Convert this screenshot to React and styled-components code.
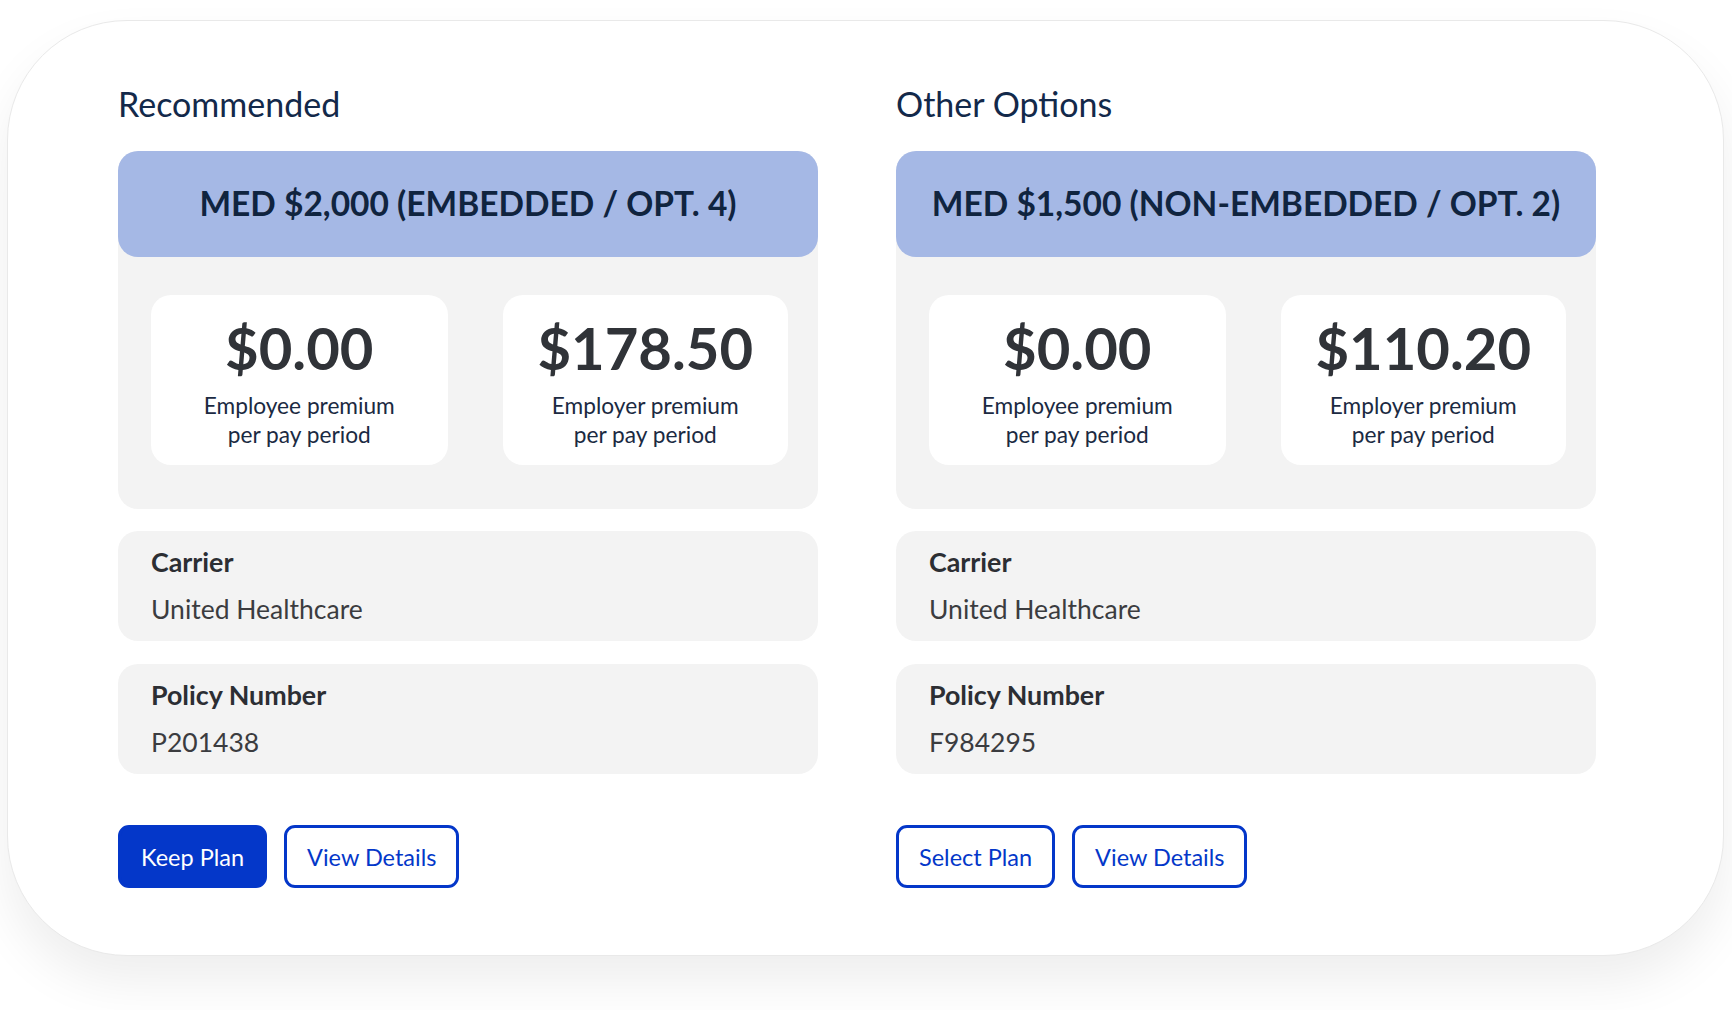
import React from 'react';
import styled, { createGlobalStyle } from 'styled-components';

const GlobalStyle = createGlobalStyle`
  html, body {
    margin: 0;
    padding: 0;
    background: #ffffff;
  }
  body {
    font-family: Lato, "Open Sans", sans-serif;
    -webkit-font-smoothing: antialiased;
  }
`;

const Page = styled.div`
  width: 1732px;
  height: 1010px;
  box-sizing: border-box;
  padding: 20px 8px 0 7px;
`;

const Card = styled.div`
  width: 1717px;
  height: 936px;
  box-sizing: border-box;
  background: #fff;
  border: 1px solid #e9e9e9;
  border-radius: 120px;
  box-shadow: 0 26px 50px rgba(0, 0, 0, 0.07);
  padding: 62px 126px 0 110px;
  display: grid;
  grid-template-columns: 700px 700px;
  column-gap: 78px;
  align-content: start;
`;

const Column = styled.section`
  display: flex;
  flex-direction: column;
`;

const Title = styled.h2`
  margin: 0 0 27px;
  font-size: 34px;
  line-height: 41px;
  font-weight: 400;
  color: #13294a;
`;

const PlanCard = styled.div`
  background: #f3f3f3;
  border-radius: 20px;
`;

const PlanHeader = styled.div`
  height: 106px;
  padding-bottom: 3px;
  box-sizing: border-box;
  display: flex;
  align-items: center;
  justify-content: center;
  background: #a5b8e5;
  border-radius: 20px;
  font-size: 33.5px;
  font-weight: 700;
  color: #10243f;
`;

const Premiums = styled.div`
  display: grid;
  grid-template-columns: 296fr 285fr;
  column-gap: 55px;
  padding: 38px 30px 44px 33px;
`;

const PremiumBox = styled.div`
  height: 170px;
  box-sizing: border-box;
  padding-top: 21px;
  background: #fff;
  border-radius: 20px;
  text-align: center;
`;

const Amount = styled.div`
  font-size: 58px;
  line-height: 64px;
  font-weight: 700;
  color: #303338;
`;

const PremiumLabel = styled.div`
  margin-top: 11px;
  font-size: 22.7px;
  line-height: 29px;
  color: #1b2a42;
`;

const InfoBox = styled.div`
  margin-top: ${p => p.$gap}px;
  height: 110px;
  box-sizing: border-box;
  padding: 16px 33px 0;
  background: #f3f3f3;
  border-radius: 20px;
`;

const InfoLabel = styled.div`
  font-size: 26.8px;
  line-height: 30px;
  font-weight: 700;
  color: #2c2e33;
`;

const InfoValue = styled.div`
  margin-top: 16px;
  font-size: 26.5px;
  line-height: 32px;
  color: #3b3c3f;
`;

const Actions = styled.div`
  display: flex;
  gap: 17px;
  margin-top: 51px;
`;

const Button = styled.button`
  height: 63px;
  padding: 0 20px;
  border: 3px solid #0437c9;
  border-radius: 11px;
  background: ${p => (p.$primary ? '#0437c9' : '#fff')};
  color: ${p => (p.$primary ? '#fff' : '#0437c9')};
  font-family: inherit;
  font-size: 23.5px;
  cursor: pointer;
`;

const plans = [
  {
    title: 'Recommended',
    name: 'MED $2,000 (EMBEDDED / OPT. 4)',
    employee: '$0.00',
    employer: '$178.50',
    carrier: 'United Healthcare',
    policy: 'P201438',
    action: 'Keep Plan',
    primary: true
  },
  {
    title: 'Other Options',
    name: 'MED $1,500 (NON-EMBEDDED / OPT. 2)',
    employee: '$0.00',
    employer: '$110.20',
    carrier: 'United Healthcare',
    policy: 'F984295',
    action: 'Select Plan',
    primary: false
  }
];

const Plan = ({ plan }) => (
  <Column>
    <Title>{plan.title}</Title>
    <PlanCard>
      <PlanHeader>{plan.name}</PlanHeader>
      <Premiums>
        <PremiumBox>
          <Amount>{plan.employee}</Amount>
          <PremiumLabel>
            Employee premium
            <br />
            per pay period
          </PremiumLabel>
        </PremiumBox>
        <PremiumBox>
          <Amount>{plan.employer}</Amount>
          <PremiumLabel>
            Employer premium
            <br />
            per pay period
          </PremiumLabel>
        </PremiumBox>
      </Premiums>
    </PlanCard>
    <InfoBox $gap={22}>
      <InfoLabel>Carrier</InfoLabel>
      <InfoValue>{plan.carrier}</InfoValue>
    </InfoBox>
    <InfoBox $gap={23}>
      <InfoLabel>Policy Number</InfoLabel>
      <InfoValue>{plan.policy}</InfoValue>
    </InfoBox>
    <Actions>
      <Button $primary={plan.primary}>{plan.action}</Button>
      <Button>View Details</Button>
    </Actions>
  </Column>
);

export default function App() {
  return (
    <Page>
      <GlobalStyle />
      <Card>
        {plans.map(plan => (
          <Plan key={plan.title} plan={plan} />
        ))}
      </Card>
    </Page>
  );
}
